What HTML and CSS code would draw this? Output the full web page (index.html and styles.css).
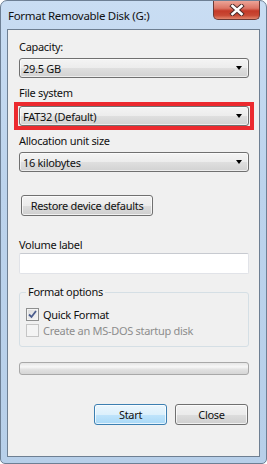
FILE: index.html
```html
<!DOCTYPE html>
<html lang="en">
<head>
    <meta charset="UTF-8">
    <meta name="viewport" content="width=device-width, initial-scale=1.0">
    <title>Format Removable Disk (G:)</title>
    <link rel="stylesheet" href="styles.css">
</head>
<body>
    <!-- Window frame -->
    <div class="window">
        <div class="titlebar">
            <span class="title">Format Removable Disk (G:)</span>
            <div class="close-btn">
                <svg width="16" height="12" viewBox="0 0 16 12">
                    <path d="M3.5 2 L12.5 10 M12.5 2 L3.5 10" stroke="#4a2a28" stroke-width="4.4" stroke-linecap="square"/>
                    <path d="M3.5 2 L12.5 10 M12.5 2 L3.5 10" stroke="#fff" stroke-width="2.6" stroke-linecap="square"/>
                </svg>
            </div>
        </div>

        <!-- Dialog content -->
        <div class="client">
            <div class="label">Capacity:</div>
            <div class="combo"><span>29.5 GB</span><span class="arrow"></span></div>

            <div class="label label-gap">File system</div>
            <div class="highlight">
                <div class="combo"><span>FAT32 (Default)</span><span class="arrow"></span></div>
            </div>

            <div class="label label-tight">Allocation unit size</div>
            <div class="combo"><span>16 kilobytes</span><span class="arrow"></span></div>

            <div class="btn restore-btn">Restore device defaults</div>

            <div class="label volume-label">Volume label</div>
            <div class="textbox"></div>

            <fieldset class="group">
                <legend>Format options</legend>
                <div class="check-row">
                    <span class="checkbox">
                        <svg width="9" height="9" viewBox="0 0 9 9">
                            <path d="M1 4.5 L3.5 7 L8 1" fill="none" stroke="#4b5d8e" stroke-width="1.8"/>
                        </svg>
                    </span>
                    <span>Quick Format</span>
                </div>
                <div class="check-row disabled">
                    <span class="checkbox"></span>
                    <span>Create an MS-DOS startup disk</span>
                </div>
            </fieldset>

            <div class="progress"></div>

            <div class="actions">
                <div class="btn btn-default">Start</div>
                <div class="btn">Close</div>
            </div>
        </div>
    </div>
</body>
</html>
```

FILE: styles.css
```css
body {
    margin: 0;
    padding: 0;
    font-family: "Noto Sans", "Open Sans", sans-serif;
    font-size: 11px;
    letter-spacing: -0.3px;
    color: #111;
    background: #fff;
}

/* Window frame */
.window {
    width: 267px;
    height: 464px;
    box-sizing: border-box;
    border: 1px solid #6d7f94;
    border-radius: 7px 7px 5px 5px;
    background: linear-gradient(#c9ddf3, #bcd3ec 40%, #b7cfe9);
    display: flex;
    flex-direction: column;
}

.titlebar {
    height: 28px;
    display: flex;
    justify-content: space-between;
    align-items: flex-start;
}

.title {
    font-size: 11.5px;
    padding: 7px 0 0 7px;
    line-height: 16px;
}

.close-btn {
    width: 45px;
    height: 18px;
    margin-right: 6px;
    border: 1px solid #6b3a36;
    border-top: none;
    border-radius: 0 0 5px 5px;
    background: linear-gradient(#eca497, #dc7565 40%, #c43a28 55%, #c94a35 80%, #e2866d);
    display: flex;
    align-items: center;
    justify-content: center;
}

.client {
    margin: 0 6px;
    height: 428px;
    box-sizing: border-box;
    border: 1px solid #6e7f92;
    background: #f0f0f0;
    padding: 9px 10px 0 11px;
}

.label {
    line-height: 16px;
    margin-bottom: 3px;
}

.label-gap {
    margin-top: 7px;
    margin-bottom: 1px;
}

.label-tight {
    margin-top: 3px;
}

/* Combo boxes */
.combo {
    height: 20px;
    box-sizing: border-box;
    border: 1px solid #707070;
    border-radius: 3px;
    background: linear-gradient(#f4f4f4, #ececec 50%, #dfdfdf 51%, #d2d2d2);
    box-shadow: inset 0 0 0 1px rgba(255, 255, 255, 0.6);
    display: flex;
    align-items: center;
    justify-content: space-between;
    padding: 0 6px 0 3px;
}

.arrow {
    width: 0;
    height: 0;
    border-left: 3.5px solid transparent;
    border-right: 3.5px solid transparent;
    border-top: 4px solid #000;
}

/* Red annotation box */
.highlight {
    border: 4px solid #ec2a2f;
    margin: 0 -5px;
    padding: 0 1px;
}

/* Buttons */
.btn {
    width: 73px;
    height: 21px;
    box-sizing: border-box;
    border: 1px solid #707070;
    border-radius: 3px;
    background: linear-gradient(#f2f2f2, #ebebeb 50%, #dddddd 51%, #cfcfcf);
    box-shadow: inset 0 0 0 1px rgba(255, 255, 255, 0.7);
    display: flex;
    align-items: center;
    justify-content: center;
}

.restore-btn {
    width: 132px;
    margin: 23px 0 0 2px;
}

.btn-default {
    border-color: #3c7fb1;
    background: linear-gradient(#ebf6fd, #dcf0fc 50%, #c0e4fb 51%, #a9d9f7);
}

.volume-label {
    margin-top: 21px;
    margin-bottom: 0;
}

.textbox {
    height: 21px;
    box-sizing: border-box;
    border: 1px solid #e1e3e8;
    border-top-color: #c7cad0;
    border-radius: 2px;
    background: #fff;
}

/* Format options group */
.group {
    margin: 10px 0 0;
    padding: 6px 6px 8px;
    border: 1px solid #d5dfe5;
    border-radius: 3px;
}

.group legend {
    padding: 0 2px;
    line-height: 16px;
}

.check-row {
    display: flex;
    align-items: center;
    gap: 4px;
    height: 16px;
}

.checkbox {
    width: 13px;
    height: 13px;
    box-sizing: border-box;
    border: 1px solid #8e8f8f;
    background: linear-gradient(135deg, #dcdcdc, #f6f6f6);
    box-shadow: inset 0 0 0 1px #f4f4f4;
    display: flex;
    align-items: center;
    justify-content: center;
}

.check-row.disabled {
    color: #8d8d8d;
}

.check-row.disabled .checkbox {
    border-color: #c5c5c5;
    background: #f4f4f4;
}

.progress {
    height: 13px;
    margin-top: 15px;
    box-sizing: border-box;
    border: 1px solid #a8a8a8;
    border-radius: 3px;
    background: linear-gradient(#e6e6e6, #f7f7f7 35%, #e1e1e1 60%, #d6d6d6);
}

.actions {
    display: flex;
    justify-content: flex-end;
    gap: 8px;
    margin: 29px 1px 0 0;
}
```
